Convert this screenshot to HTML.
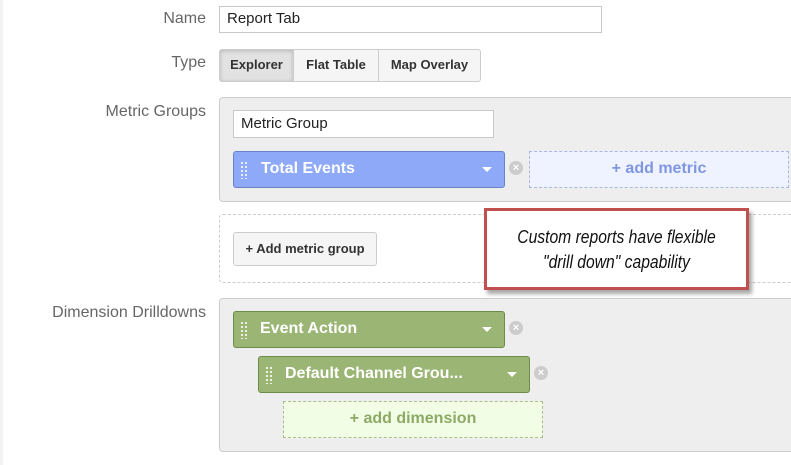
<!DOCTYPE html>
<html><head><style>
body{margin:0;width:791px;height:465px;background:#fff;font-family:"Liberation Sans",Arial,sans-serif;position:relative;overflow:hidden}
.a{position:absolute;box-sizing:border-box}
.lbl{position:absolute;right:585px;font-size:16px;color:#666;text-align:right;white-space:nowrap}
.inp{border:1px solid #c8c8c8;background:#fff;font-size:15px;color:#222;padding-left:7px;line-height:24px}
.btn{border:1px solid #ccc;background:#f5f5f5;font-size:13px;font-weight:bold;color:#333;text-align:center;line-height:30px}
.bar{border-radius:3px;color:#fff;font-weight:bold;font-size:16px;line-height:34px}
.grip{position:absolute;left:6px;top:9px;width:7px;height:18px;background-image:radial-gradient(circle,rgba(255,255,255,.85) 1px,transparent 1.3px);background-size:4px 4px}
.caret{position:absolute;right:12px;top:15px;width:0;height:0;border-left:5px solid transparent;border-right:5px solid transparent;border-top:5px solid #fff}
.x{position:absolute;width:14px;height:14px;border-radius:50%;background:#ccc;color:#fff;font-size:11px;line-height:14px;text-align:center;font-weight:bold}
</style></head><body>
<div class="a" style="left:0;top:0;width:3px;height:465px;background:#f3f3f3"></div>
<div class="lbl" style="top:10px">Name</div>
<div class="a inp" style="left:219px;top:6px;width:383px;height:27px">Report Tab</div>
<div class="lbl" style="top:54px">Type</div>
<div class="a btn" style="left:219px;top:49px;width:75px;height:33px;background:#e2e2e2;box-shadow:inset 0 1px 4px rgba(0,0,0,.2);border-radius:3px 0 0 3px">Explorer</div>
<div class="a btn" style="left:293px;top:49px;width:86px;height:33px">Flat Table</div>
<div class="a btn" style="left:378px;top:49px;width:103px;height:33px;border-radius:0 3px 3px 0">Map Overlay</div>

<div class="lbl" style="top:103px">Metric Groups</div>
<div class="a" style="left:219px;top:97px;width:590px;height:105px;background:#eee;border:1px solid #ccc;border-radius:4px"></div>
<div class="a inp" style="left:233px;top:110px;width:261px;height:28px;line-height:26px">Metric Group</div>
<div class="a bar" style="left:233px;top:151px;width:272px;height:37px;background:#8ea9f8;border:1px solid #6a82c8;padding-left:27px"><span class="grip"></span>Total Events<span class="caret"></span></div>
<div class="x" style="left:509px;top:161px">×</div>
<div class="a" style="left:529px;top:151px;width:260px;height:37px;border:1px dashed #a9b8e0;background:#eef3ff;color:#8096e0;font-weight:bold;font-size:16px;text-align:center;line-height:34px">+ add metric</div>

<div class="a" style="left:219px;top:214px;width:590px;height:69px;border:1px dashed #ccc;border-radius:4px"></div>
<div class="a btn" style="left:233px;top:232px;width:144px;height:34px;line-height:32px;border-radius:3px;font-size:13px">+ Add metric group</div>

<div class="a" style="left:484px;top:208px;width:265px;height:82px;border:3px solid #c0504d;background:#fff;box-shadow:3px 4px 4px rgba(0,0,0,.35);font-style:italic;font-size:18px;color:#111;text-align:center;padding-top:14px;line-height:25px"><div style="transform:scaleX(0.87);transform-origin:center">Custom reports have flexible<br>"drill down" capability</div></div>

<div class="lbl" style="top:304px">Dimension Drilldowns</div>
<div class="a" style="left:219px;top:298px;width:590px;height:154px;background:#eee;border:1px solid #ccc;border-radius:4px"></div>
<div class="a bar" style="left:233px;top:311px;width:272px;height:37px;background:#9bb574;border:1px solid #6f8b4b;padding-left:26px"><span class="grip"></span>Event Action<span class="caret"></span></div>
<div class="x" style="left:509px;top:321px">×</div>
<div class="a bar" style="left:258px;top:356px;width:272px;height:37px;background:#9bb574;border:1px solid #6f8b4b;padding-left:26px"><span class="grip"></span>Default Channel Grou...<span class="caret"></span></div>
<div class="x" style="left:534px;top:366px">×</div>
<div class="a" style="left:283px;top:401px;width:260px;height:37px;border:1px dashed #a9bf8a;background:#f2fde6;color:#8caa66;font-weight:bold;font-size:16px;text-align:center;line-height:34px">+ add dimension</div>
</body></html>
